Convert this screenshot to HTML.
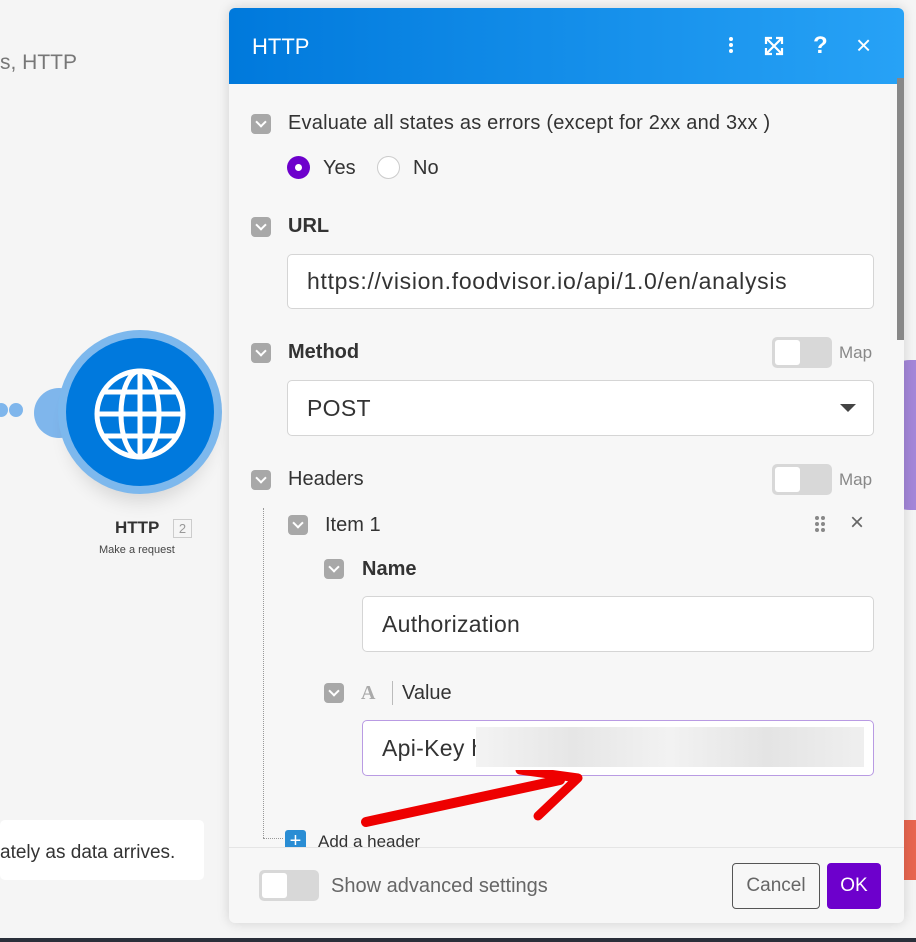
<!DOCTYPE html>
<html><head><style>
*{box-sizing:border-box;margin:0;padding:0}
body{width:916px;height:942px;overflow:hidden;background:#f5f5f5;font-family:"Liberation Sans",sans-serif;position:relative;color:#333}
.abs{position:absolute}
.cb{position:absolute;width:20px;height:20px;background:#a8a8a8;border-radius:4px}
.cb:after{content:"";position:absolute;left:6px;top:4px;width:6px;height:6px;border-right:2px solid #fff;border-bottom:2px solid #fff;transform:rotate(45deg)}
.lbl{position:absolute;font-size:20px;color:#333}
.inp{position:absolute;background:#fff;border:1px solid #d5d5d5;border-radius:5px;font-size:23px;letter-spacing:0.3px;color:#333;padding-left:19px;display:flex;align-items:center}
.tog{position:absolute;width:60px;height:31px;background:#d8d8d8;border-radius:5px}
.tog:before{content:"";position:absolute;left:3px;top:3px;width:25px;height:25px;background:#fff;border-radius:3px}
.map{position:absolute;font-size:17px;color:#888}
</style></head><body>
<div class="abs" style="left:0;top:51px;font-size:21px;color:#777">s, HTTP</div>
<div class="abs" style="left:-6px;top:403px;width:14px;height:14px;border-radius:50%;background:#7fb6ec"></div>
<div class="abs" style="left:9px;top:403px;width:14px;height:14px;border-radius:50%;background:#7fb6ec"></div>
<div class="abs" style="left:34px;top:388px;width:50px;height:50px;border-radius:50%;background:#7fb6ec"></div>
<div class="abs" style="left:880px;top:360px;width:40px;height:150px;background:#a487d9;border-radius:30px 0 0 30px"></div>
<div class="abs" style="left:58px;top:330px;width:164px;height:164px;border-radius:50%;background:#7db8ed;box-shadow:0 18px 18px -10px rgba(0,0,0,.12)"></div>
<div class="abs" style="left:66px;top:338px;width:148px;height:148px;border-radius:50%;background:#0079dd"></div>
<svg class="abs" style="left:92px;top:366px" width="96" height="96" viewBox="0 0 96 96" fill="none" stroke="#fff" stroke-width="5">
<circle cx="48" cy="48" r="43"/><ellipse cx="48" cy="48" rx="19" ry="43"/><line x1="48" y1="5" x2="48" y2="91"/><line x1="5" y1="48" x2="91" y2="48"/><path d="M12 26H84M12 70H84"/></svg>
<div class="abs" style="left:115px;top:518px;font-size:17px;font-weight:bold;color:#333">HTTP</div>
<div class="abs" style="left:173px;top:519px;width:19px;height:19px;border:1px solid #ccc;font-size:13px;color:#999;text-align:center;line-height:17px">2</div>
<div class="abs" style="left:99px;top:544px;font-size:11px;color:#444">Make a request</div>
<div class="abs" style="left:0;top:820px;width:204px;height:60px;background:#fff;border-radius:5px"></div>
<div class="abs" style="left:0;top:842px;font-size:19px;color:#333">ately as data arrives.</div>
<div class="abs" style="left:903px;top:820px;width:13px;height:60px;background:#e8664f"></div>
<div class="abs" style="left:0;top:938px;width:916px;height:4px;background:#2a2f3a"></div>
<div class="abs" style="left:229px;top:8px;width:675px;height:915px;background:#f7f7f7;border-radius:6px;box-shadow:0 0 12px rgba(0,0,0,.15);overflow:hidden">
 <div style="height:76px;background:linear-gradient(90deg,#0079dc,#27a2f6);position:relative">
  <div class="abs" style="left:23px;top:26px;color:#fff;font-size:22px">HTTP</div>
  <div class="abs" style="left:500px;top:29px;width:4px;height:4px;background:#fff;border-radius:2px;box-shadow:0 6px 0 #fff,0 12px 0 #fff"></div>
  <svg class="abs" style="left:535px;top:28px" width="20" height="20" viewBox="0 0 20 20" stroke="#fff" stroke-width="2.2" fill="none"><path d="M2 2L18 18M18 2L2 18M2 8V2H8M12 2H18V8M18 12V18H12M8 18H2V12"/></svg>
  <div class="abs" style="left:584px;top:24px;color:#fff;font-size:24px;font-weight:bold">?</div>
  <div class="abs" style="left:627px;top:22px;color:#fff;font-size:26px">×</div>
 </div>
 <div class="abs" style="left:668px;top:70px;width:7px;height:262px;background:#888"></div>
</div>
<div class="cb" style="left:251px;top:114px"></div>
<div class="lbl" style="left:288px;top:112px;letter-spacing:0.2px">Evaluate all states as errors (except for 2xx and 3xx )</div>
<div class="abs" style="left:287px;top:156px;width:23px;height:23px;border-radius:50%;background:#6d00cc"></div>
<div class="abs" style="left:295px;top:164px;width:7px;height:7px;border-radius:50%;background:#fff"></div>
<div class="lbl" style="left:323px;top:157px">Yes</div>
<div class="abs" style="left:377px;top:156px;width:23px;height:23px;border-radius:50%;background:#fff;border:1px solid #ccc"></div>
<div class="lbl" style="left:413px;top:157px">No</div>
<div class="cb" style="left:251px;top:217px"></div>
<div class="lbl" style="left:288px;top:215px;font-weight:bold">URL</div>
<div class="inp" style="left:287px;top:254px;width:587px;height:55px;letter-spacing:0.7px">https://vision.foodvisor.io/api/1.0/en/analysis</div>
<div class="cb" style="left:251px;top:343px"></div>
<div class="lbl" style="left:288px;top:341px;font-weight:bold">Method</div>
<div class="tog" style="left:772px;top:337px"></div><div class="map" style="left:839px;top:343px">Map</div>
<div class="inp" style="left:287px;top:380px;width:587px;height:56px">POST</div>
<div class="abs" style="left:840px;top:404px;border-left:8px solid transparent;border-right:8px solid transparent;border-top:8px solid #444"></div>
<div class="cb" style="left:251px;top:470px"></div>
<div class="lbl" style="left:288px;top:468px">Headers</div>
<div class="tog" style="left:772px;top:464px"></div><div class="map" style="left:839px;top:470px">Map</div>
<div class="abs" style="left:263px;top:508px;height:330px;border-left:1px dotted #999"></div>
<div class="abs" style="left:263px;top:838px;width:20px;border-top:1px dotted #999"></div>
<div class="cb" style="left:288px;top:515px"></div>
<div class="lbl" style="left:325px;top:514px">Item 1</div>
<div class="abs" style="left:815px;top:516px;width:4px;height:4px;background:#888;border-radius:2px;box-shadow:6px 0 #888,0 6px #888,6px 6px #888,0 12px #888,6px 12px #888"></div>
<div class="abs" style="left:850px;top:509px;font-size:24px;color:#666">×</div>
<div class="cb" style="left:324px;top:559px"></div>
<div class="lbl" style="left:362px;top:558px;font-weight:bold">Name</div>
<div class="inp" style="left:362px;top:596px;width:512px;height:56px">Authorization</div>
<div class="cb" style="left:324px;top:683px"></div>
<div class="abs" style="left:361px;top:682px;font-size:20px;color:#aaa;font-family:'Liberation Serif',serif;font-weight:bold">A</div>
<div class="abs" style="left:392px;top:681px;height:24px;border-left:1px solid #bbb"></div>
<div class="lbl" style="left:402px;top:682px">Value</div>
<div class="inp" style="left:362px;top:720px;width:512px;height:56px;border-color:#b99be3">Api-Key h</div>
<div class="abs" style="left:476px;top:727px;width:388px;height:40px;background:linear-gradient(90deg,#f3f3f3,#e6e6e6,#f2f2f2,#e4e4e4,#efefef)"></div>
<svg class="abs" style="left:360px;top:770px" width="230" height="60"><path d="M6 52L200 10" stroke="#e00" stroke-width="10" stroke-linecap="round"/><path d="M160 0L218 8L178 46" fill="none" stroke="#e00" stroke-width="9" stroke-linecap="round" stroke-linejoin="round"/></svg>
<div class="abs" style="left:285px;top:830px;width:21px;height:17px;background:#2a8dd4;border-radius:3px 3px 0 0;color:#fff;font-size:20px;line-height:22px;text-align:center;overflow:hidden">+</div>
<div class="abs" style="left:318px;top:832px;height:15px;overflow:hidden;font-size:17px;color:#333">Add a header</div>
<div class="abs" style="left:229px;top:847px;width:675px;border-top:1px solid #e5e5e5"></div>
<div class="tog" style="left:259px;top:870px"></div>
<div class="abs" style="left:331px;top:875px;font-size:20px;color:#666">Show advanced settings</div>
<div class="abs" style="left:732px;top:863px;width:88px;height:46px;border:1px solid #555;border-radius:4px;font-size:19px;color:#666;text-align:center;line-height:44px">Cancel</div>
<div class="abs" style="left:827px;top:863px;width:54px;height:46px;background:#6d00cc;border-radius:4px;font-size:19px;color:#fff;text-align:center;line-height:46px">OK</div>
</body></html>
